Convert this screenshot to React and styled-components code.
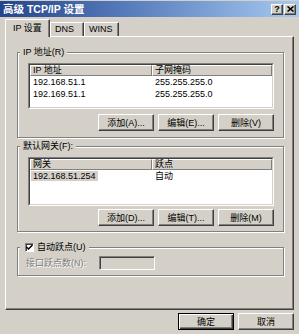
import React from 'react'
import styled, { createGlobalStyle, css } from 'styled-components'

const FONT = '"Liberation Sans", "Noto Sans CJK SC", sans-serif'

const GlobalStyle = createGlobalStyle`
  html, body { margin: 0; padding: 0; background: #d4d0c8; }
  body { font-family: ${FONT}; font-size: 9px; color: #000; }
  * { box-sizing: border-box; }
`

const raised = css`
  background: #d4d0c8;
  border: 1px solid;
  border-color: #fff #404040 #404040 #fff;
  box-shadow: inset -1px -1px #808080;
`

const Window = styled.div`
  width: 299px;
  height: 334px;
  display: flex;
  flex-direction: column;
  background: #d4d0c8;
`

const TitleBar = styled.div`
  margin-top: 1px;
  height: 16px;
  display: flex;
  align-items: center;
  justify-content: space-between;
  padding: 0 3px;
  background: linear-gradient(90deg, #234489 0%, #5a7fbf 45%, #a6caf0 100%);
`

const Title = styled.span`
  color: #fff;
  font-weight: bold;
  font-size: 10.5px;
  line-height: 12px;
  white-space: pre;
`

const Caps = styled.div`
  display: flex;
  gap: 1px;
`

const CapButton = styled.div`
  ${raised};
  width: 12px;
  height: 11px;
  display: flex;
  align-items: center;
  justify-content: center;
  font-weight: bold;
  font-size: 9px;
  line-height: 9px;
`

const Body = styled.div`
  display: flex;
  flex-direction: column;
  padding: 2px 5px 0;
`

const Tabs = styled.div`
  display: flex;
  align-items: flex-end;
  height: 17px;
  position: relative;
  z-index: 1;
`

const Tab = styled.div`
  width: ${(p) => p.$w}px;
  height: ${(p) => (p.$active ? 18 : 14)}px;
  margin-bottom: ${(p) => (p.$active ? -1 : 0)}px;
  padding-left: ${(p) => (p.$active ? 7 : 4)}px;
  padding-top: ${(p) => (p.$active ? 3 : 1)}px;
  background: #d4d0c8;
  border: 1px solid;
  border-bottom: none;
  border-color: #fff #404040 transparent #fff;
  box-shadow: inset -1px 0 #808080;
  line-height: 11px;
  white-space: pre;
`

const Panel = styled.div`
  display: flex;
  flex-direction: column;
  height: 274px;
  padding: 15px 9px 0 11px;
  border: 1px solid;
  border-color: #fff #404040 #404040 #fff;
  box-shadow: inset -1px -1px #808080;
`

const Group = styled.div`
  position: relative;
  margin-top: ${(p) => p.$top || 0}px;
  height: ${(p) => p.$h}px;
  padding: ${(p) => p.$pad};
  border: 1px solid #808080;
  box-shadow: inset 1px 1px #fff, 1px 1px #fff;
  display: flex;
  flex-direction: column;
`

const Legend = styled.div`
  position: absolute;
  top: -6px;
  left: 2px;
  padding: 0 3px 0 ${(p) => p.$padLeft || 3}px;
  background: #d4d0c8;
  line-height: 11px;
  display: flex;
  align-items: center;
  gap: 3px;
  white-space: pre;
`

const ListFrame = styled.div`
  height: ${(p) => p.$h}px;
  border: 1px solid;
  border-color: #808080 #fff #fff #808080;
`

const ListInner = styled.div`
  height: 100%;
  background: #fff;
  border: 1px solid;
  border-color: #404040 #d4d0c8 #d4d0c8 #404040;
  overflow: hidden;
`

const HeadRow = styled.div`
  display: flex;
  height: 11px;
`

const HeadCell = styled.div`
  ${(p) => (p.$w ? `width: ${p.$w}px;` : 'flex: 1;')}
  background: #d4d0c8;
  border: 1px solid;
  border-color: #fff #808080 #808080 #fff;
  padding-left: 2px;
  line-height: 9px;
  white-space: pre;
`

const Row = styled.div`
  display: flex;
  height: 12px;
  align-items: center;
`

const Cell = styled.div`
  ${(p) => (p.$w ? `width: ${p.$w}px;` : 'flex: 1;')}
  padding-left: 1px;
  line-height: 10px;
  white-space: pre;
`

const CellText = styled.span`
  display: inline-block;
  padding: 0 2px;
  line-height: 10px;
  background: ${(p) => (p.$selected ? '#d4d0c8' : 'transparent')};
`

const ButtonRow = styled.div`
  display: flex;
  justify-content: flex-end;
  gap: 4px;
  margin-top: ${(p) => p.$top}px;
`

const Button = styled.div`
  ${raised};
  width: 56px;
  height: 17px;
  display: flex;
  align-items: center;
  justify-content: center;
  line-height: 10px;
  white-space: pre;
  ${(p) =>
    p.$default &&
    css`
      border-color: #000;
      box-shadow: inset 1px 1px #fff, inset -1px -1px #404040, inset -2px -2px #808080;
    `}
`

const Checkbox = styled.span`
  width: 9px;
  height: 9px;
  background: #fff;
  border: 1px solid;
  border-color: #808080 #fff #fff #808080;
  box-shadow: inset 1px 1px #404040;
  display: flex;
  align-items: center;
  justify-content: center;
`

const Field = styled.div`
  display: flex;
  align-items: center;
  gap: 13px;
`

const DisabledText = styled.span`
  color: #808080;
  text-shadow: 1px 1px #fff;
  line-height: 11px;
  white-space: pre;
`

const Input = styled.div`
  width: 56px;
  height: 14px;
  background: #d4d0c8;
  border: 1px solid;
  border-color: #808080 #fff #fff #808080;
  box-shadow: inset 1px 1px #404040;
`

const Footer = styled.div`
  display: flex;
  justify-content: flex-end;
  gap: 4px;
  margin-top: 3px;
`

const ListView = ({ height, columns, rows }) => (
  <ListFrame $h={height}>
    <ListInner>
      <HeadRow>
        {columns.map((c, i) => (
          <HeadCell key={c} $w={i === 0 ? 122 : undefined}>
            {c}
          </HeadCell>
        ))}
      </HeadRow>
      {rows.map((r, ri) => (
        <Row key={ri}>
          {r.cells.map((c, i) => (
            <Cell key={i} $w={i === 0 ? 122 : undefined}>
              <CellText $selected={r.selected && i === 0}>{c}</CellText>
            </Cell>
          ))}
        </Row>
      ))}
    </ListInner>
  </ListFrame>
)

const App = () => {
  return (
    <Window>
      <GlobalStyle />
      <TitleBar>
        <Title>高级 TCP/IP 设置</Title>
        <Caps>
          <CapButton>?</CapButton>
          <CapButton>
            <svg width="7" height="6" viewBox="0 0 7 6">
              <path d="M0.5 0.5 L6.5 5.5 M6.5 0.5 L0.5 5.5" stroke="#000" strokeWidth="1.6" />
            </svg>
          </CapButton>
        </Caps>
      </TitleBar>

      <Body>
        <Tabs>
          <Tab $active $w={45}>IP 设置</Tab>
          <Tab $w={34}>DNS</Tab>
          <Tab $w={35}>WINS</Tab>
        </Tabs>

        <Panel>
          <Group $h={86} $pad="10px 9px 0 10px">
            <Legend>IP 地址(R)</Legend>
            <ListView
              height={46}
              columns={['IP 地址', '子网掩码']}
              rows={[
                { cells: ['192.168.51.1', '255.255.255.0'] },
                { cells: ['192.169.51.1', '255.255.255.0'] },
              ]}
            />
            <ButtonRow $top={5}>
              <Button>添加(A)...</Button>
              <Button>编辑(E)...</Button>
              <Button>删除(V)</Button>
            </ButtonRow>
          </Group>

          <Group $top={8} $h={86} $pad="10px 9px 0 10px">
            <Legend>默认网关(F):</Legend>
            <ListView
              height={49}
              columns={['网关', '跃点']}
              rows={[{ cells: ['192.168.51.254', '自动'], selected: true }]}
            />
            <ButtonRow $top={3}>
              <Button>添加(D)...</Button>
              <Button>编辑(T)...</Button>
              <Button>删除(M)</Button>
            </ButtonRow>
          </Group>

          <Group $top={15} $h={29} $pad="8px 9px 0 8px">
            <Legend $padLeft={5}>
              <Checkbox>
                <svg width="7" height="7" viewBox="0 0 7 7">
                  <path d="M0.5 3 L2.5 5 L6.5 1" stroke="#000" strokeWidth="1.5" fill="none" />
                </svg>
              </Checkbox>
              自动跃点(U)
            </Legend>
            <Field>
              <DisabledText>接口跃点数(N):</DisabledText>
              <Input />
            </Field>
          </Group>
        </Panel>

        <Footer>
          <Button $default>确定</Button>
          <Button>取消</Button>
        </Footer>
      </Body>
    </Window>
  )
}

export default App
